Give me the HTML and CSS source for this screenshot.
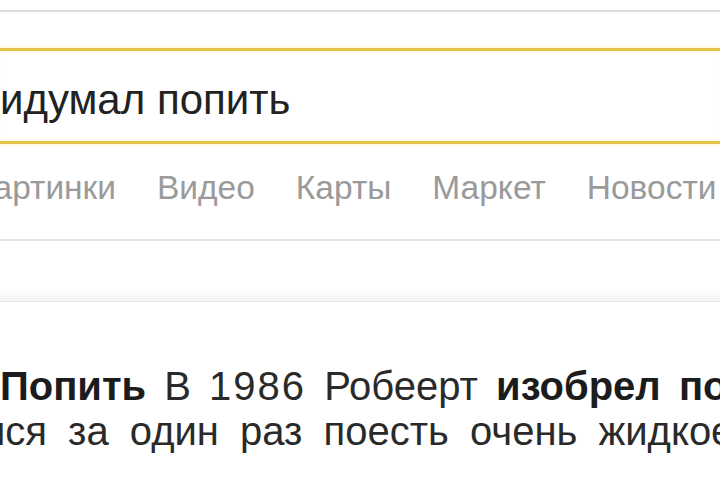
FILE: index.html
```html
<!DOCTYPE html>
<html lang="ru">
<head>
<meta charset="utf-8">
<link rel="stylesheet" href="styles.css">
</head>
<body>
<div class="page">
  <div class="topline"></div>
  <div class="search">
    <div class="query">идумал попить</div>
  </div>
  <nav class="nav">
    <span class="nav-item">Картинки</span>
    <span class="nav-item">Видео</span>
    <span class="nav-item">Карты</span>
    <span class="nav-item">Маркет</span>
    <span class="nav-item">Новости</span>
  </nav>
  <div class="band"></div>
  <div class="result">
    <div class="line line-1"><b>Попить</b> В <span class="num">1986</span> Робеерт <b>изобрел попить</b></div>
    <div class="line line-2">лся за один раз поесть очень жидкое</div>
  </div>
</div>
</body>
</html>
```

FILE: styles.css
```css
html, body {
  margin: 0;
  padding: 0;
  background: #ffffff;
  overflow: hidden;
}
body {
  width: 720px;
  height: 480px;
  font-family: "Liberation Sans", Arial, sans-serif;
}
.page {
  width: 720px;
  overflow: hidden;
}
.topline {
  margin-top: 10px;
  height: 2px;
  background: #dcdcdc;
}
.search {
  margin-top: 36px;
  border-top: 3px solid #e6c34a;
  border-bottom: 3px solid #e6c34a;
  box-shadow: 0 -2px 3px -1px #fff6c2, 0 2px 3px -1px #fff6c2, inset 0 2px 3px -1px #fffbe0, inset 0 -2px 3px -1px #fffbe0;
  padding: 25px 0 17px;
  box-sizing: border-box;
  height: 96px;
}
.query {
  font-size: 42px;
  line-height: 48px;
  color: #222222;
  white-space: nowrap;
}
.nav {
  display: flex;
  gap: 41px;
  margin-top: 24px;
  margin-left: -26px;
  padding-bottom: 31px;
  border-bottom: 2px solid #e2e2e2;
  white-space: nowrap;
}
.nav-item {
  font-size: 33.5px;
  line-height: 40px;
  color: #9a9a9a;
}
.band {
  height: 50px;
  margin-top: 10px;
  border-bottom: 1px solid #e6e6e6;
  background: linear-gradient(to bottom, #ffffff 0%, #ffffff 75%, #f4f4f4 100%);
}
.result {
  padding-top: 62px;
  color: #2a2a2a;
}
.line {
  font-size: 40px;
  line-height: 45px;
  white-space: nowrap;
  word-spacing: 7px;
}
.line b {
  color: #1c1c1c;
}
.num {
  letter-spacing: 2px;
}
.line-2 {
  text-indent: -18px;
  word-spacing: 10px;
}
```
